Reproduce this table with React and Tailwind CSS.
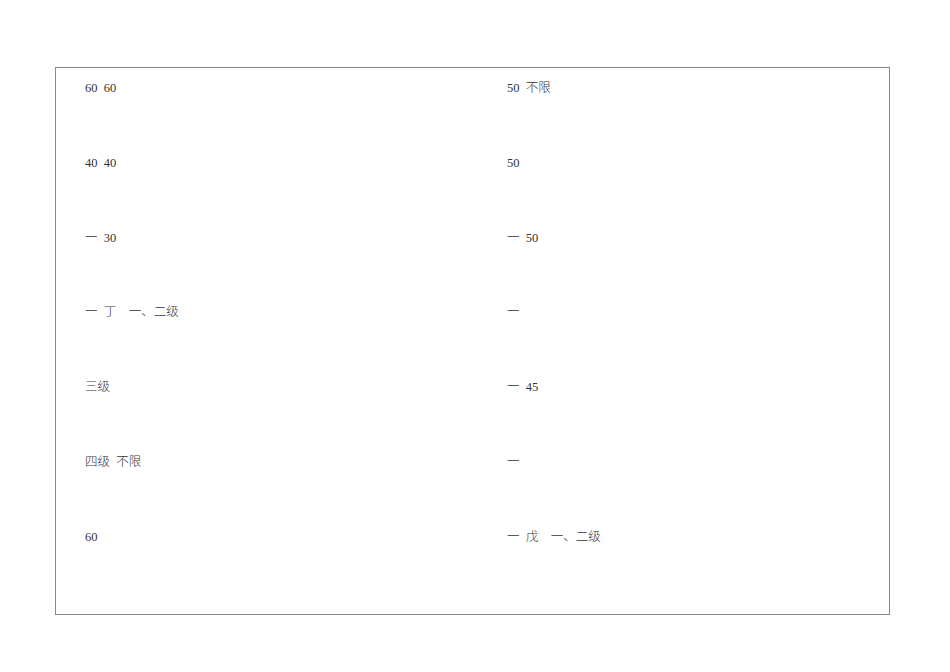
export default function App() {
  const left = ["60  60", "40  40", "一  30", "一  丁    一、二级", "三级", "四级  不限", "60"];
  const right = ["50  不限", "50", "一  50", "一", "一  45", "一", "一  戊    一、二级"];
  const font = { fontFamily: '"Liberation Serif", "Noto Sans CJK SC", serif' };
  return (
    <div className="w-[950px] h-[672px] bg-white pt-[67px] pl-[55px]">
      <div className="w-[835px] h-[548px] border border-[#8a8a8a] pt-[13px] pl-[29px]" style={font}>
        <div className="grid grid-cols-[422px_1fr] text-[12.5px] leading-[15px] text-[#333333]">
          <div className="flex flex-col">
            {left.map((t, i) => (
              <div key={i} className="h-[74.8px] whitespace-pre font-light">{t}</div>
            ))}
          </div>
          <div className="flex flex-col">
            {right.map((t, i) => (
              <div key={i} className="h-[74.8px] whitespace-pre font-light">{t}</div>
            ))}
          </div>
        </div>
      </div>
    </div>
  );
}
